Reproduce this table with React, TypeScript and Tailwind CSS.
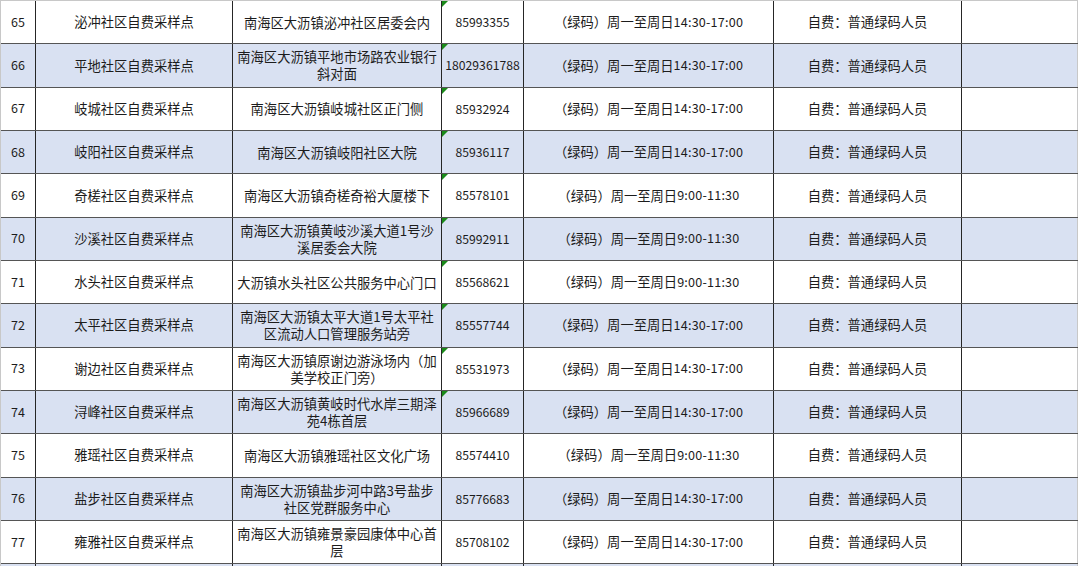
type Row = {
  no: number
  name: string
  addr: string[]
  phone: string
  time: string
  mark: boolean
}

const PM = '14:30-17:00'
const AM = '9:00-11:30'

const rows: Row[] = [
  { no: 65, name: '泌冲社区自费采样点', addr: ['南海区大沥镇泌冲社区居委会内'], phone: '85993355', time: PM, mark: true },
  { no: 66, name: '平地社区自费采样点', addr: ['南海区大沥镇平地市场路农业银行', '斜对面'], phone: '18029361788', time: PM, mark: true },
  { no: 67, name: '岐城社区自费采样点', addr: ['南海区大沥镇岐城社区正门侧'], phone: '85932924', time: PM, mark: true },
  { no: 68, name: '岐阳社区自费采样点', addr: ['南海区大沥镇岐阳社区大院'], phone: '85936117', time: PM, mark: true },
  { no: 69, name: '奇槎社区自费采样点', addr: ['南海区大沥镇奇槎奇裕大厦楼下'], phone: '85578101', time: AM, mark: true },
  { no: 70, name: '沙溪社区自费采样点', addr: ['南海区大沥镇黄岐沙溪大道1号沙', '溪居委会大院'], phone: '85992911', time: AM, mark: true },
  { no: 71, name: '水头社区自费采样点', addr: ['大沥镇水头社区公共服务中心门口'], phone: '85568621', time: AM, mark: true },
  { no: 72, name: '太平社区自费采样点', addr: ['南海区大沥镇太平大道1号太平社', '区流动人口管理服务站旁'], phone: '85557744', time: PM, mark: true },
  { no: 73, name: '谢边社区自费采样点', addr: ['南海区大沥镇原谢边游泳场内（加', '美学校正门旁）'], phone: '85531973', time: PM, mark: true },
  { no: 74, name: '浔峰社区自费采样点', addr: ['南海区大沥镇黄岐时代水岸三期泽', '苑4栋首层'], phone: '85966689', time: PM, mark: true },
  { no: 75, name: '雅瑶社区自费采样点', addr: ['南海区大沥镇雅瑶社区文化广场'], phone: '85574410', time: AM, mark: false },
  { no: 76, name: '盐步社区自费采样点', addr: ['南海区大沥镇盐步河中路3号盐步', '社区党群服务中心'], phone: '85776683', time: PM, mark: false },
  { no: 77, name: '雍雅社区自费采样点', addr: ['南海区大沥镇雍景豪园康体中心首', '层'], phone: '85708102', time: PM, mark: false },
]

const cell = 'h-full flex items-center justify-center border-r border-r-[#262626] text-center'

function SheetRow({ row, blue }: { row?: Row; blue: boolean }) {
  return (
    <div className={`flex h-[43.33px] shrink-0 border-b border-b-[#555] ${blue ? 'bg-[#d9e1f2]' : 'bg-white'}`}>
      <div className="h-full w-[35px] flex items-center pl-[10px] border-r border-r-[#262626] text-[12.5px]">
        {row?.no}
      </div>
      <div className={`${cell} w-[197px]`}>{row?.name}</div>
      <div className={`${cell} w-[209px] flex-col leading-[17px]`}>
        {row?.addr.map(l => (
          <span key={l} className="whitespace-nowrap">{l}</span>
        ))}
      </div>
      <div className={`${cell} w-[82px] relative text-[12.2px]`}>
        {row?.mark && (
          <span className="absolute left-0 top-0 w-0 h-0 border-t-[6px] border-r-[6px] border-t-[#1a8a1a] border-r-transparent" />
        )}
        {row?.phone}
      </div>
      <div className={`${cell} w-[250px] whitespace-nowrap`}>
        {row && (
          <>
            （绿码）周一至周日<span className="text-[12.6px] tracking-[0.2px]">{row.time}</span>
          </>
        )}
      </div>
      <div className={`${cell} w-[188px]`}>{row && '自费：普通绿码人员'}</div>
      <div className="h-full w-[116px] border-r border-r-[#c8c8c8]" />
    </div>
  )
}

export default function App() {
  return (
    <div
      className="w-[1080px] h-[566px] overflow-hidden bg-white text-[#1c1c1c] text-[13.3px]"
      style={{ fontFamily: '"Noto Sans CJK SC", "Noto Sans", sans-serif' }}
    >
      <div className="flex flex-col w-[1078px] h-[566px] border-t border-l border-[#c8c8c8]">
        {rows.map((r, i) => (
          <SheetRow key={r.no} row={r} blue={i % 2 === 1} />
        ))}
        <SheetRow blue />
      </div>
    </div>
  )
}
